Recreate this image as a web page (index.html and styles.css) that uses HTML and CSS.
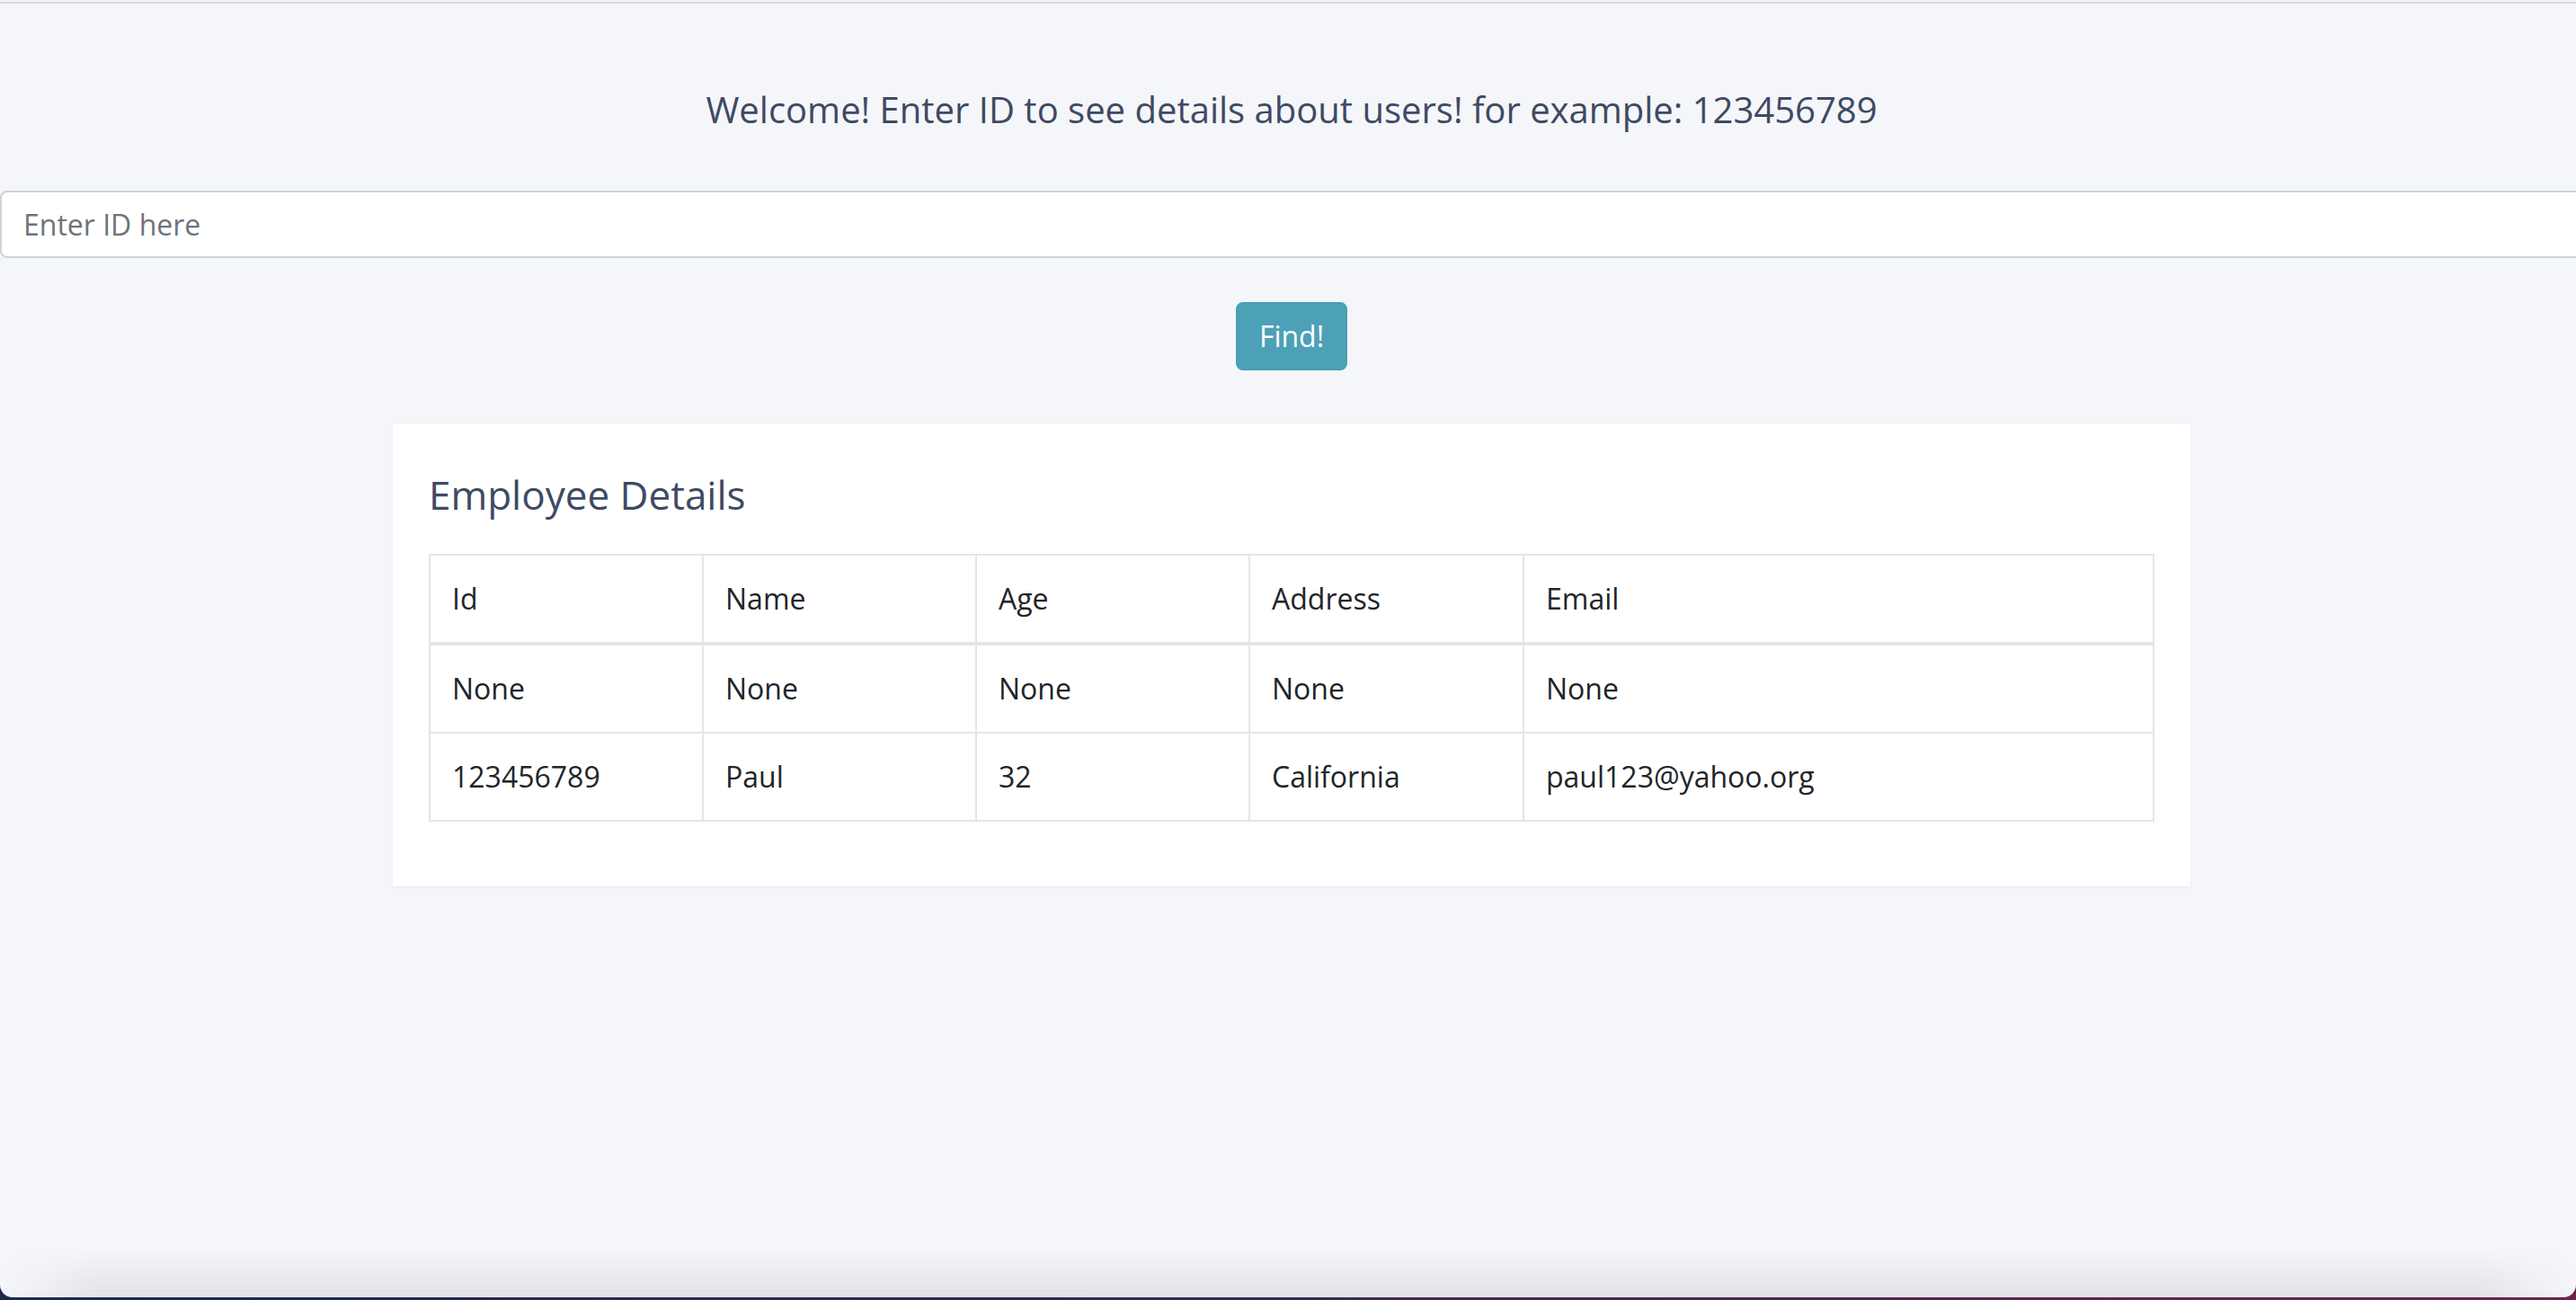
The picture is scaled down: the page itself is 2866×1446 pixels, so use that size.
FILE: index.html
```html
<!DOCTYPE html>
<html lang="en">
<head>
<meta charset="utf-8">
<title>Employee Details</title>
<link rel="stylesheet" href="styles.css">
</head>
<body>
<div class="window">
  <div class="topline"></div>
  <main class="page">
    <p class="welcome">Welcome! Enter ID to see details about users! for example: 123456789</p>
    <input class="id-input" type="text" placeholder="Enter ID here">
    <div class="actions">
      <button class="find-btn" type="button">Find!</button>
    </div>
    <section class="card">
      <h4 class="card-title">Employee Details</h4>
      <table class="details">
        <thead>
          <tr>
            <th class="c1">Id</th>
            <th class="c2">Name</th>
            <th class="c3">Age</th>
            <th class="c4">Address</th>
            <th class="c5">Email</th>
          </tr>
        </thead>
        <tbody>
          <tr>
            <td>None</td>
            <td>None</td>
            <td>None</td>
            <td>None</td>
            <td>None</td>
          </tr>
          <tr>
            <td>123456789</td>
            <td>Paul</td>
            <td>32</td>
            <td>California</td>
            <td>paul123@yahoo.org</td>
          </tr>
        </tbody>
      </table>
    </section>
  </main>
  <div class="bottom-shade"></div>
</div>
</body>
</html>
```
FILE: styles.css
```css
html {
  background: linear-gradient(to right, #1b2a4e 0%, #3a2a50 50%, #6c2548 100%);
  height: 100%;
}
body {
  margin: 0;
  overflow: hidden;
  font-family: "Open Sans", "Noto Sans", "Liberation Sans", sans-serif;
}
.window {
  position: relative;
  height: 1443px;
  background: #f5f6fa;
  border-radius: 0 0 14px 14px;
  overflow: hidden;
}
.topline {
  height: 2px;
  margin-top: 2px;
  background: #d7d9dc;
}
.page {
  width: 2874px;
  display: flex;
  flex-direction: column;
  align-items: center;
}
.welcome {
  margin: 94px 0 0;
  font-size: 40px;
  line-height: 48px;
  color: #3e4a63;
  text-align: center;
}
.id-input {
  align-self: stretch;
  box-sizing: border-box;
  margin: 66px 0 0;
  height: 75px;
  padding: 0 24px;
  border: 2px solid #ced2d8;
  border-radius: 8px;
  background: #fff;
  font-family: inherit;
  font-size: 32px;
  color: #495057;
  outline: none;
}
.id-input::placeholder {
  color: #6c757d;
}
.actions {
  margin-top: 49px;
  display: flex;
  justify-content: center;
}
.find-btn {
  box-sizing: border-box;
  height: 76px;
  padding: 0 24px;
  border: 2px solid #4a9fb4;
  border-radius: 8px;
  background: #4ca1b6;
  color: #fff;
  font-family: inherit;
  font-size: 32px;
  line-height: 48px;
}
.card {
  box-sizing: border-box;
  width: 2000px;
  margin-top: 60px;
  padding: 52px 40px 40px;
  background: #fff;
  box-shadow: 0 2px 3px rgba(0, 0, 0, 0.04);
}
.card-title {
  margin: 0 0 40px;
  font-size: 44px;
  line-height: 52px;
  font-weight: 400;
  color: #3e4a63;
}
.details {
  width: 100%;
  border-collapse: collapse;
  table-layout: fixed;
  margin-bottom: 32px;
  font-size: 32px;
  line-height: 48px;
  color: #212529;
}
.details th,
.details td {
  border: 2px solid #e4e5e7;
  padding: 24px 24px;
  text-align: left;
  font-weight: 400;
  vertical-align: top;
}
.details thead th {
  border-bottom-width: 4px;
}
.c1, .c2, .c3 { width: 254px; }
.c4 { width: 255px; }
.bottom-shade {
  position: absolute;
  left: 0;
  right: 0;
  bottom: 0;
  height: 54px;
  background: linear-gradient(to bottom, rgba(0, 0, 0, 0) 0%, rgba(0, 0, 0, 0.08) 100%);
  -webkit-mask-image: linear-gradient(to right, transparent 0, #000 110px, #000 calc(100% - 110px), transparent 100%);
  mask-image: linear-gradient(to right, transparent 0, #000 110px, #000 calc(100% - 110px), transparent 100%);
  pointer-events: none;
}
```
